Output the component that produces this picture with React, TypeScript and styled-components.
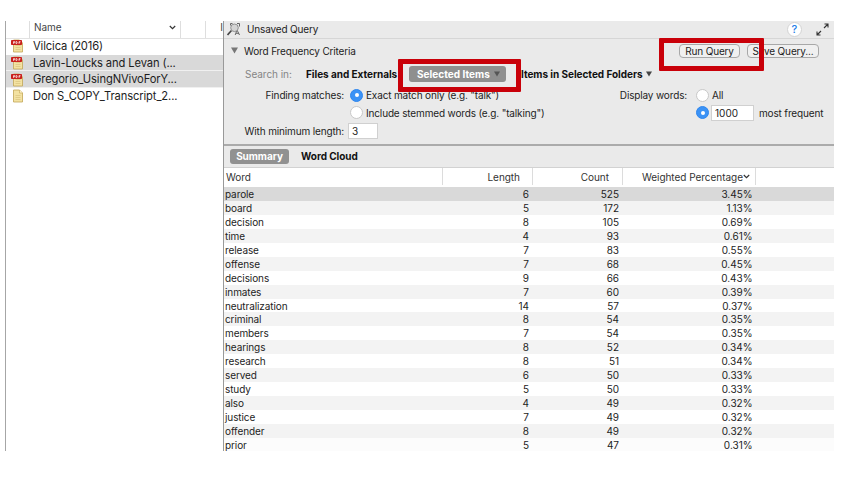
import React from "react";
import styled, { createGlobalStyle } from "styled-components";

const Global = createGlobalStyle`
  *, *::before, *::after { box-sizing: border-box; }
  body { margin: 0; background: #fff; }
`;

const Page = styled.main`
  width: 856px;
  height: 490px;
  padding: 21px 22px 39px 5px;
  overflow: hidden;
  background: #fff;
  color: #1d1d1d;
  font: 10px/14px Inter, "Liberation Sans", sans-serif;
  letter-spacing: -0.15px;
  white-space: nowrap;
`;

const Window = styled.div`
  position: relative;
  display: flex;
  width: 829px;
  height: 430px;
  overflow: hidden;
`;

const Sidebar = styled.aside`
  width: 218px;
  border-left: 1px solid #a6a6a6;
  background: #fff;
`;

const SideHeader = styled.div`
  display: grid;
  grid-template-columns: 24px 151px 25px 1fr;
  height: 18px;
  margin-bottom: -1px;
  border-bottom: 1px solid #e2e2e2;
  color: #444;
  letter-spacing: -0.05px;
`;

const SideHeaderCell = styled.div`
  display: flex;
  align-items: center;
  justify-content: space-between;
  height: 17px;
  padding: 0 4px 5px 4px;
  border-right: 1px solid #dedede;
  overflow: hidden;
  &:last-child { border: 0; justify-content: flex-end; padding-right: 0; }
`;

const FileRow = styled.div<{ $selected?: boolean }>`
  display: flex;
  align-items: center;
  height: 16.7px;
  padding: 1px 0 0 5px;
  gap: 9px;
  border-bottom: 1px solid ${(p) => (p.$selected ? "#f0f0f0" : "transparent")};
  background: ${(p) => (p.$selected ? "#d9d9d9" : "transparent")};
  font-size: 11.2px;
  line-height: 15px;
  letter-spacing: -0.12px;
`;

const QueryPane = styled.section`
  display: flex;
  flex-direction: column;
  width: 611px;
  border-left: 1px solid #999;
  background: #eaeaea;
`;

const TitleBar = styled.header`
  display: flex;
  flex: none;
  align-items: center;
  height: 18px;
  padding: 0 5px 1px 3px;
  border-bottom: 1px solid #d6d6d6;
`;

const Title = styled.span`
  flex: 1;
  margin-left: 6px;
`;

const HelpButton = styled.button`
  width: 15px;
  height: 15px;
  margin-right: 14px;
  padding: 0;
  border: 1px solid #d3d3d3;
  border-radius: 50%;
  background: #fff;
  color: #2480e8;
  font: 500 11px/13px Inter, sans-serif;
`;

const Criteria = styled.div`
  flex: none;
  height: 107px;
  padding-top: 2px;
  border-bottom: 2px solid #ababab;
`;

const CriteriaHeading = styled.div`
  display: flex;
  align-items: center;
  height: 19px;
  padding: 0 15px 0 7px;
`;

const HeadingText = styled.span`
  flex: 1;
  margin-left: 6px;
`;

const PushButton = styled.button<{ $width: number }>`
  width: ${(p) => p.$width}px;
  height: 14px;
  margin-left: 7px;
  padding: 0;
  border: 1px solid #a8a8a8;
  border-radius: 4px;
  background: #f0f0f0;
  color: #1d1d1d;
  font: inherit;
  letter-spacing: inherit;
  line-height: 12px;
`;

const SearchRow = styled.div`
  display: flex;
  align-items: center;
  height: 27px;
  padding-left: 21px;
  font-weight: 700;
  letter-spacing: -0.04px;
  color: #111;
`;

const SearchLabel = styled.span`
  width: 61px;
  color: #858585;
  font-weight: 400;
`;

const ScopeOption = styled.span<{ $width: number }>`
  display: flex;
  align-items: center;
  gap: 4px;
  width: ${(p) => p.$width}px;
`;

const ScopeButton = styled.span`
  display: flex;
  align-items: center;
  gap: 4px;
  width: 97px;
  height: 16px;
  margin-right: 15px;
  padding-left: 8px;
  border-radius: 3px;
  background: #8f8f8f;
  color: #fff;
  letter-spacing: 0.03px;
`;

const Options = styled.div`
  display: grid;
  grid-template-columns: 120px 22px 235px 86px 25px auto;
  grid-template-rows: 16px 19px 18px;
  align-items: center;
`;

const OptionLabel = styled.span`
  justify-self: end;
`;

const Radio = styled.span<{ $checked?: boolean; $offset: number }>`
  display: grid;
  place-items: center;
  width: 13px;
  height: 13px;
  margin-left: ${(p) => p.$offset}px;
  border: 1px solid ${(p) => (p.$checked ? "#2e86ee" : "#c8c8c8")};
  border-radius: 50%;
  background: ${(p) => (p.$checked ? "#3b92f5" : "#fff")};
  &::after {
    content: "";
    width: 4px;
    height: 4px;
    border-radius: 50%;
    background: #fff;
  }
`;

const Field = styled.span<{ $width: number }>`
  display: inline-block;
  width: ${(p) => p.$width}px;
  height: 16px;
  padding-left: 3px;
  border: 1px solid #d0d0d0;
  background: #fff;
  letter-spacing: 0;
`;

const Frequency = styled.span`
  display: flex;
  align-items: center;
  gap: 5px;
  margin-left: -1px;
`;

const LengthField = styled.span`
  grid-column: 2 / span 2;
  height: 16px;
  margin-left: 4px;
`;

const Tabs = styled.nav`
  display: flex;
  flex: none;
  align-items: center;
  height: 22px;
  padding-left: 6px;
  gap: 12px;
  border-bottom: 1px solid #d2d2d2;
  font-weight: 700;
  letter-spacing: -0.05px;
`;

const Tab = styled.span<{ $active?: boolean }>`
  height: 15px;
  line-height: 15px;
  width: ${(p) => (p.$active ? "59px" : "auto")};
  text-align: center;
  border-radius: 3px;
  background: ${(p) => (p.$active ? "#919191" : "transparent")};
  color: ${(p) => (p.$active ? "#fff" : "#111")};
`;

const columns = "219px 90px 90px 133px 1fr";

const TableHeader = styled.div`
  display: grid;
  grid-template-columns: ${columns};
  height: 19px;
  flex: none;
  background: #fff;
  color: #333;
  letter-spacing: -0.03px;
`;

const HeaderCell = styled.span<{ $numeric?: boolean; $end?: number }>`
  display: flex;
  align-items: center;
  justify-content: ${(p) => (p.$numeric ? "flex-end" : "flex-start")};
  height: 17px;
  padding: 0 ${(p) => p.$end ?? 0}px 0 2px;
  border-right: 1px solid #dcdcdc;
  &:last-child { border: 0; }
`;

const TableRow = styled.div<{ $tone: string }>`
  display: grid;
  grid-template-columns: ${columns};
  height: 13.95px;
  flex: none;
  background: ${(p) => p.$tone};
  letter-spacing: -0.1px;
`;

const Cell = styled.span<{ $end?: number }>`
  padding-left: 1px;
  padding-right: ${(p) => p.$end ?? 0}px;
  text-align: ${(p) => (p.$end === undefined ? "left" : "right")};
  letter-spacing: ${(p) => (p.$end === undefined ? "inherit" : "-0.02px")};
`;

const Highlight = styled.div<{ $x: number; $y: number; $w: number; $h: number }>`
  position: absolute;
  left: ${(p) => p.$x}px;
  top: ${(p) => p.$y}px;
  width: ${(p) => p.$w}px;
  height: ${(p) => p.$h}px;
  border: 5px solid #c90009;
  border-radius: 1px;
`;

const FileIcon = ({ pdf }: { pdf?: boolean }) => (
  <svg width="13" height="14" viewBox="0 0 13 14">
    <path d="M2.5 1h6l3 3v9h-9z" fill="#f3e2a2" stroke="#c2a656" strokeWidth=".8" />
    <path d="M8.5 1v3h3" fill="#fff5cc" stroke="#c2a656" strokeWidth=".6" />
    <path d="M4.5 6.5h5M4.5 8.5h5M4.5 10.5h5" stroke="#d3bd78" strokeWidth=".6" />
    {pdf && (
      <>
        <rect x="0" y="1" width="11" height="5" rx=".8" fill="#c91f1b" />
        <path d="M2.5 4.8V2.6h1.2v1.2H2.5M5 2.6v2h.8q.7-1 0-2zM8 4.8V2.6h1.5M8 3.7h1.2" fill="none" stroke="#fff" strokeWidth=".7" />
      </>
    )}
  </svg>
);

const Chevron = () => (
  <svg width="7" height="5" viewBox="0 0 7 5">
    <path d="M.8 1l2.7 2.7L6.2 1" fill="none" stroke="#333" strokeWidth="1.2" />
  </svg>
);

const Triangle = ({ size = 6, color = "#444" }: { size?: number; color?: string }) => (
  <svg width={size} height={size} viewBox="0 0 6 6">
    <path d="M0 .5h6L3 5.5z" fill={color} />
  </svg>
);

const QueryIcon = () => (
  <svg width="14" height="14" viewBox="0 0 14 14" fill="none" stroke="#444">
    <path d="M.5 13l4-4.5" strokeWidth="1.6" />
    <path d="M3.5 3.5v-2h2M10 1.5h2.5v3M8.2 13l1.8-5 2.5 5M9 11.3h3" stroke="#666" strokeWidth="1" />
    <circle cx="7.5" cy="5.8" r="3.8" fill="#d4d4d4" stroke="#888" strokeWidth=".9" />
  </svg>
);

const ExpandIcon = () => (
  <svg width="13" height="13" viewBox="0 0 13 13" fill="none" stroke="#333" strokeWidth="1.1">
    <path d="M8.5 1H12v3.5M12 1L8 5M1 8.5V12h3.5M1 12l4-4" />
  </svg>
);

const files = [
  { name: "Vilcica (2016)", pdf: true },
  { name: "Lavin-Loucks and Levan (...", pdf: true, selected: true },
  { name: "Gregorio_UsingNVivoForY...", pdf: true, selected: true },
  { name: "Don S_COPY_Transcript_2..." },
];

const words: [string, number, number, string][] = [
  ["parole", 6, 525, "3.45%"],
  ["board", 5, 172, "1.13%"],
  ["decision", 8, 105, "0.69%"],
  ["time", 4, 93, "0.61%"],
  ["release", 7, 83, "0.55%"],
  ["offense", 7, 68, "0.45%"],
  ["decisions", 9, 66, "0.43%"],
  ["inmates", 7, 60, "0.39%"],
  ["neutralization", 14, 57, "0.37%"],
  ["criminal", 8, 54, "0.35%"],
  ["members", 7, 54, "0.35%"],
  ["hearings", 8, 52, "0.34%"],
  ["research", 8, 51, "0.34%"],
  ["served", 6, 50, "0.33%"],
  ["study", 5, 50, "0.33%"],
  ["also", 4, 49, "0.32%"],
  ["justice", 7, 49, "0.32%"],
  ["offender", 8, 49, "0.32%"],
  ["prior", 5, 47, "0.31%"],
];

const rowTone = (i: number) => (i === 0 ? "#d9d9d9" : i % 2 ? "#f3f3f3" : i === 18 ? "#fcfcfc" : "#fff");

export default function App() {
  return (
    <>
      <Global />
      <Page>
        <Window>
          <Sidebar>
            <SideHeader>
              <SideHeaderCell />
              <SideHeaderCell>Name<Chevron /></SideHeaderCell>
              <SideHeaderCell />
              <SideHeaderCell>I</SideHeaderCell>
            </SideHeader>
            {files.map((f) => (
              <FileRow key={f.name} $selected={f.selected}>
                <FileIcon pdf={f.pdf} />
                {f.name}
              </FileRow>
            ))}
          </Sidebar>
          <QueryPane>
            <TitleBar>
              <QueryIcon />
              <Title>Unsaved Query</Title>
              <HelpButton>?</HelpButton>
              <ExpandIcon />
            </TitleBar>
            <Criteria>
              <CriteriaHeading>
                <Triangle size={7} color="#777" />
                <HeadingText>Word Frequency Criteria</HeadingText>
                <PushButton $width={61}>Run Query</PushButton>
                <PushButton $width={72}>Save Query...</PushButton>
              </CriteriaHeading>
              <SearchRow>
                <SearchLabel>Search in:</SearchLabel>
                <ScopeOption $width={103}>Files and Externals</ScopeOption>
                <ScopeButton>Selected Items<Triangle color="#555" /></ScopeButton>
                <ScopeOption $width={140}>Items in Selected Folders<Triangle /></ScopeOption>
              </SearchRow>
              <Options>
                <OptionLabel>Finding matches:</OptionLabel>
                <Radio $checked $offset={6} />
                <span>Exact match only (e.g. "talk")</span>
                <OptionLabel>Display words:</OptionLabel>
                <Radio $offset={9} />
                <span>All</span>
                <span />
                <Radio $offset={6} />
                <span>Include stemmed words (e.g. "talking")</span>
                <span />
                <Radio $checked $offset={9} />
                <Frequency><Field $width={43}>1000</Field>most frequent</Frequency>
                <OptionLabel>With minimum length:</OptionLabel>
                <LengthField><Field $width={30}>3</Field></LengthField>
              </Options>
            </Criteria>
            <Tabs>
              <Tab $active>Summary</Tab>
              <Tab>Word Cloud</Tab>
            </Tabs>
            <TableHeader>
              <HeaderCell>Word</HeaderCell>
              <HeaderCell $numeric $end={12}>Length</HeaderCell>
              <HeaderCell $numeric $end={13}>Count</HeaderCell>
              <HeaderCell $numeric $end={5}>Weighted Percentage<Chevron /></HeaderCell>
              <HeaderCell />
            </TableHeader>
            {words.map(([word, length, count, share], i) => (
              <TableRow key={word} $tone={rowTone(i)}>
                <Cell>{word}</Cell>
                <Cell $end={4}>{length}</Cell>
                <Cell $end={4}>{count}</Cell>
                <Cell $end={3.5}>{share}</Cell>
              </TableRow>
            ))}
          </QueryPane>
          <Highlight $x={393} $y={38} $w={123} $h={33} />
          <Highlight $x={654} $y={17} $w={105} $h={33} />
        </Window>
      </Page>
    </>
  );
}
